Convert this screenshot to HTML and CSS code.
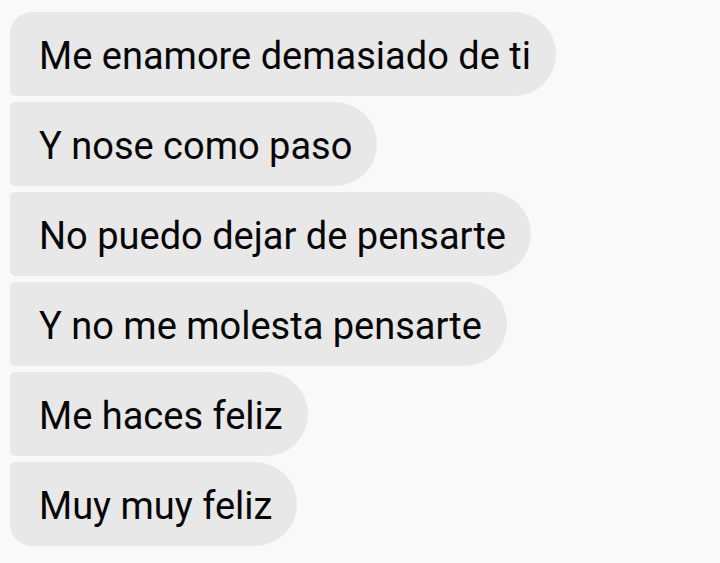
FILE: index.html
```html
<!DOCTYPE html>
<html>
<head>
<meta charset="utf-8">
<link rel="stylesheet" href="styles.css">
</head>
<body>
<div class="thread">
  <div class="bubble first">Me enamore demasiado de ti</div>
  <div class="bubble">Y nose como paso</div>
  <div class="bubble">No puedo dejar de pensarte</div>
  <div class="bubble">Y no me molesta pensarte</div>
  <div class="bubble">Me haces feliz</div>
  <div class="bubble last">Muy muy feliz</div>
</div>
</body>
</html>
```
FILE: styles.css
```css
html, body {
  margin: 0;
  padding: 0;
  background: #f9f9f9;
}
body {
  width: 720px;
  height: 563px;
  overflow: hidden;
}
.thread {
  display: flex;
  flex-direction: column;
  align-items: flex-start;
  gap: 6px;
  padding: 12px 0 0 10px;
}
.bubble {
  box-sizing: border-box;
  height: 84px;
  display: flex;
  align-items: center;
  padding: 4px 25px 0 29px;
  background: #e8e8e8;
  color: #050505;
  font-family: Roboto, "Noto Sans", sans-serif;
  font-size: 38px;
  white-space: nowrap;
  border-radius: 5px 42px 42px 5px;
}
.bubble.first {
  border-top-left-radius: 22px;
}
.bubble.last {
  border-bottom-left-radius: 22px;
}
```
